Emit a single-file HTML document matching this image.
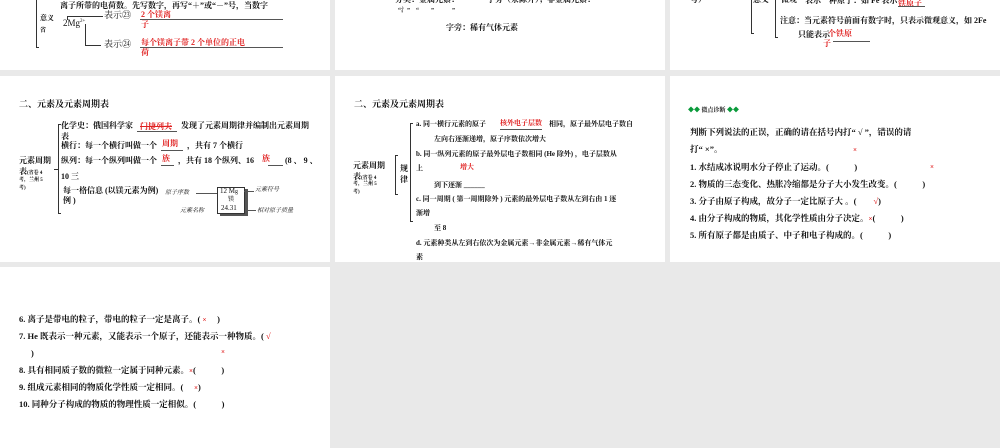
<!DOCTYPE html>
<html><head><meta charset="utf-8"><style>
*{margin:0;padding:0;box-sizing:border-box}
body{width:1000px;height:448px;background:#e9e9e9;position:relative;overflow:hidden;font-family:"Liberation Serif","Noto Serif CJK SC",serif;color:#111}
.s{position:absolute;background:#fff}
.t{position:absolute;white-space:nowrap;font-size:8px;font-weight:bold;line-height:1}
.r{color:#e02020}
.x{color:#e02020;font-size:7px}
.l{position:absolute;background:#333}
.u{position:absolute;height:1px;background:#555}
.g{color:#0a9a3a}
</style></head><body>
<div class="s" style="left:0;top:0;width:330px;height:70px"></div>
<div class="s" style="left:335px;top:0;width:330px;height:70px"></div>
<div class="s" style="left:670px;top:0;width:330px;height:70px"></div>
<div class="s" style="left:0;top:76px;width:330px;height:186px"></div>
<div class="s" style="left:335px;top:76px;width:330px;height:186px"></div>
<div class="s" style="left:670px;top:76px;width:330px;height:186px"></div>
<div class="s" style="left:0;top:267px;width:330px;height:181px"></div>

<!-- slide 1 row1 -->
<div class="t" style="left:60px;top:2px">离子所带的电荷数。先写数字，再写“＋”或“－”号，当数字</div>
<div class="l" style="left:36px;top:0;width:1px;height:48px"></div>
<div class="l" style="left:36px;top:47px;width:3px;height:1px"></div>
<div class="t" style="left:40px;top:15px;font-size:7px">意义</div>
<div class="t" style="left:40px;top:28px;font-size:6px">省</div>
<div class="t" style="left:63px;top:19px;font-weight:normal;font-size:9px">2Mg<sup style="font-size:5px">2+</sup></div>
<div class="l" style="left:67px;top:16px;width:1px;height:4px"></div>
<div class="l" style="left:67px;top:16px;width:36px;height:1px"></div>
<div class="l" style="left:85px;top:24px;width:1px;height:22px"></div>
<div class="l" style="left:85px;top:45px;width:16px;height:1px"></div>
<div class="t" style="left:104px;top:11px;font-weight:normal;font-size:9px">表示㉓</div>
<div class="t r" style="left:141px;top:11px">2 个镁离</div>
<div class="t r" style="left:141px;top:21px">子</div>
<div class="u" style="left:140px;top:19px;width:143px"></div>
<div class="t" style="left:104px;top:40px;font-weight:normal;font-size:9px">表示㉔</div>
<div class="t r" style="left:141px;top:39px">每个镁离子带 2 个单位的正电</div>
<div class="t r" style="left:141px;top:49px">荷</div>
<div class="u" style="left:140px;top:47px;width:143px"></div>

<!-- slide 2 row1 -->
<div class="t" style="left:395px;top:-4px">分类：金属元素：　　　　字旁（汞除外）；非金属元素：</div>
<div class="t" style="left:398px;top:8px;font-size:6px">“氵”　“　　”　　　”</div>
<div class="t" style="left:446px;top:24px">字旁：稀有气体元素</div>

<!-- slide 3 row1 -->
<div class="t" style="left:690px;top:-4px">号）</div>
<div class="t" style="left:753px;top:-4px">意义</div>
<div class="t" style="left:781px;top:-4px">微观</div>
<div class="t" style="left:805px;top:-3px">表示一种原子：如 Fe 表示</div>
<div class="t r" style="left:898px;top:0px">铁原子</div>
<div class="u" style="left:898px;top:6px;width:27px"></div>
<div class="l" style="left:751px;top:0;width:1px;height:34px"></div>
<div class="l" style="left:751px;top:33px;width:3px;height:1px"></div>
<div class="l" style="left:775px;top:0;width:1px;height:38px"></div>
<div class="l" style="left:775px;top:37px;width:3px;height:1px"></div>
<div class="t" style="left:780px;top:17px">注意：当元素符号前面有数字时，只表示微观意义，如 2Fe</div>
<div class="t" style="left:798px;top:31px">只能表示</div>
<div class="t r" style="left:828px;top:30px">个铁原</div>
<div class="t r" style="left:823px;top:40px">子</div>
<div class="u" style="left:833px;top:41px;width:37px"></div>

<!-- slide 1 row2 -->
<div class="t" style="left:19px;top:100px;font-size:9px">二、元素及元素周期表</div>
<div class="l" style="left:58px;top:124px;width:1px;height:90px"></div>
<div class="l" style="left:58px;top:124px;width:3px;height:1px"></div>
<div class="l" style="left:58px;top:213px;width:3px;height:1px"></div>
<div class="l" style="left:54px;top:169px;width:4px;height:1px"></div>
<div class="t" style="left:19px;top:157px">元素周期</div>
<div class="t" style="left:19px;top:168px">表<span style="font-size:5px">(省卷 4</span></div>
<div class="t" style="left:19px;top:178px;font-size:5px">考，兰州 5</div>
<div class="t" style="left:19px;top:186px;font-size:5px">考)</div>
<div class="t" style="left:61px;top:122px">化学史：俄国科学家</div>
<div class="t r" style="left:140px;top:123px;text-decoration:line-through">门捷列夫</div>
<div class="u" style="left:137px;top:131px;width:40px"></div>
<div class="t" style="left:181px;top:122px">发现了元素周期律并编制出元素周期</div>
<div class="t" style="left:61px;top:133px">表</div>
<div class="t" style="left:61px;top:142px">横行：每一个横行叫做一个</div>
<div class="t r" style="left:162px;top:140px">周期</div>
<div class="u" style="left:161px;top:150px;width:22px"></div>
<div class="t" style="left:187px;top:142px">，共有 7 个横行</div>
<div class="t" style="left:61px;top:157px">纵列：每一个纵列叫做一个</div>
<div class="t r" style="left:162px;top:155px">族</div>
<div class="u" style="left:161px;top:165px;width:13px"></div>
<div class="t" style="left:178px;top:157px">，共有 18 个纵列、16</div>
<div class="t r" style="left:262px;top:155px">族</div>
<div class="u" style="left:268px;top:165px;width:15px"></div>
<div class="t" style="left:285px;top:157px">(8 、 9 、</div>
<div class="t" style="left:61px;top:173px">10 三</div>
<div class="t" style="left:63px;top:187px">每一格信息 (以镁元素为例)</div>
<div class="t" style="left:63px;top:197px">例 )</div>
<div style="position:absolute;left:217px;top:187px;width:28px;height:27px;border:1px solid #333;box-shadow:3px 2px 0 #555"></div>
<div class="t" style="left:220px;top:188px;font-size:7px;font-weight:normal">12 M<small>g</small></div>
<div class="t" style="left:228px;top:197px;font-size:6px;font-weight:normal">镁</div>
<div class="t" style="left:221px;top:205px;font-size:7px;font-weight:normal">24.31</div>
<div class="t" style="left:165px;top:190px;font-size:6px;font-weight:normal;font-style:italic">原子序数</div>
<div class="u" style="left:196px;top:193px;width:21px"></div>
<div class="t" style="left:180px;top:208px;font-size:6px;font-weight:normal;font-style:italic">元素名称</div>
<div class="t" style="left:255px;top:187px;font-size:6px;font-weight:normal;font-style:italic">元素符号</div>
<div class="u" style="left:244px;top:191px;width:10px"></div>
<div class="t" style="left:257px;top:208px;font-size:6px;font-weight:normal;font-style:italic">相对原子质量</div>
<div class="u" style="left:248px;top:210px;width:8px"></div>

<!-- slide 2 row2 -->
<div class="t" style="left:354px;top:100px;font-size:9px">二、元素及元素周期表</div>
<div class="t" style="left:353px;top:162px">元素周期</div>
<div class="t" style="left:353px;top:173px">表<span style="font-size:5px">(省卷 4</span></div>
<div class="t" style="left:353px;top:182px;font-size:5px">考，兰州 5</div>
<div class="t" style="left:353px;top:190px;font-size:5px">考)</div>
<div class="l" style="left:395px;top:155px;width:1px;height:40px"></div>
<div class="l" style="left:395px;top:155px;width:3px;height:1px"></div>
<div class="l" style="left:395px;top:194px;width:3px;height:1px"></div>
<div class="t" style="left:400px;top:165px">规</div>
<div class="t" style="left:400px;top:176px">律</div>
<div class="l" style="left:410px;top:123px;width:1px;height:99px"></div>
<div class="l" style="left:410px;top:123px;width:3px;height:1px"></div>
<div class="l" style="left:410px;top:221px;width:3px;height:1px"></div>
<div class="t" style="left:416px;top:121px;font-size:7px">a. 同一横行元素的原子</div>
<div class="t r" style="left:500px;top:120px;font-size:7px">核外电子层数</div>
<div class="u" style="left:500px;top:129px;width:42px"></div>
<div class="t" style="left:549px;top:121px;font-size:7px">相同，原子最外层电子数自</div>
<div class="t" style="left:434px;top:136px;font-size:7px">左向右逐渐递增，原子序数依次增大</div>
<div class="t" style="left:416px;top:151px;font-size:7px">b. 同一纵列元素的原子最外层电子数相同 (He 除外) ，电子层数从</div>
<div class="t" style="left:416px;top:165px;font-size:7px">上</div>
<div class="t r" style="left:460px;top:164px;font-size:7px">增大</div>
<div class="t" style="left:434px;top:182px;font-size:7px">到下逐渐 ______</div>
<div class="t" style="left:416px;top:196px;font-size:7px">c. 同一周期 ( 第一周期除外 ) 元素的最外层电子数从左到右由 1 逐</div>
<div class="t" style="left:416px;top:210px;font-size:7px">渐增</div>
<div class="t" style="left:434px;top:225px;font-size:7px">至 8</div>
<div class="t" style="left:416px;top:240px;font-size:7px">d. 元素种类从左到右依次为金属元素→非金属元素→稀有气体元</div>
<div class="t" style="left:416px;top:254px;font-size:7px">素</div>

<!-- slide 3 row2 -->
<div class="t" style="left:688px;top:108px;font-size:6px"><span class="g">◆◆</span> 微点诊断 <span class="g">◆◆</span></div>
<div class="t" style="left:690px;top:128px;font-size:8.5px">判断下列说法的正误，正确的请在括号内打“ √ ”，错误的请</div>
<div class="t" style="left:690px;top:145px;font-size:8.5px">打“ ×”。</div>
<div class="t x" style="left:853px;top:147px">×</div>
<div class="t" style="left:690px;top:163px;font-size:8.5px">1. 水结成冰说明水分子停止了运动。(　　　)</div>
<div class="t x" style="left:930px;top:164px">×</div>
<div class="t" style="left:690px;top:180px;font-size:8.5px">2. 物质的三态变化、热胀冷缩都是分子大小发生改变。(　　　)</div>
<div class="t" style="left:690px;top:197px;font-size:8.5px">3. 分子由原子构成，故分子一定比原子大 。(　　<span class="r">√</span>)</div>
<div class="t" style="left:690px;top:214px;font-size:8.5px">4. 由分子构成的物质，其化学性质由分子决定。<span class="x">×</span>(　　　)</div>
<div class="t" style="left:690px;top:231px;font-size:8.5px">5. 所有原子都是由质子、中子和电子构成的。(　　　)</div>

<!-- slide 1 row3 -->
<div class="t" style="left:19px;top:315px;font-size:8.5px">6. 离子是带电的粒子，带电的粒子一定是离子。( <span class="x">×</span>　 )</div>
<div class="t" style="left:19px;top:332px;font-size:8.5px">7. He 既表示一种元素，又能表示一个原子，还能表示一种物质。( <span class="r">√</span></div>
<div class="t" style="left:31px;top:349px;font-size:8.5px">)</div>
<div class="t x" style="left:221px;top:349px">×</div>
<div class="t" style="left:19px;top:366px;font-size:8.5px">8. 具有相同质子数的微粒一定属于同种元素。<span class="x">×</span>(　　　)</div>
<div class="t" style="left:19px;top:383px;font-size:8.5px">9. 组成元素相同的物质化学性质一定相同。(　 <span class="x">×</span>)</div>
<div class="t" style="left:19px;top:400px;font-size:8.5px">10. 同种分子构成的物质的物理性质一定相似。(　　　)</div>
</body></html>
